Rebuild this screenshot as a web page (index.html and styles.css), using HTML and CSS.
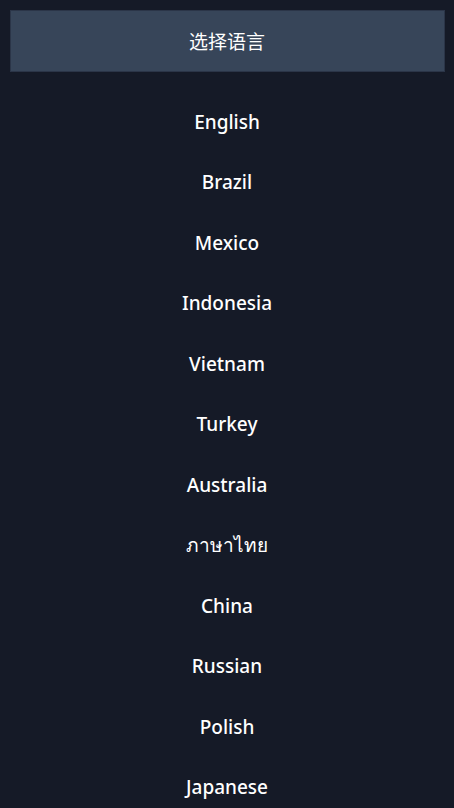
FILE: index.html
```html
<!DOCTYPE html>
<html lang="zh">
<head>
<meta charset="utf-8">
<link rel="stylesheet" href="styles.css">
</head>
<body>
<div class="page">
  <div class="header">选择语言</div>
  <ul class="lang-list">
    <li class="lang">English</li>
    <li class="lang">Brazil</li>
    <li class="lang">Mexico</li>
    <li class="lang">Indonesia</li>
    <li class="lang">Vietnam</li>
    <li class="lang">Turkey</li>
    <li class="lang">Australia</li>
    <li class="lang">ภาษาไทย</li>
    <li class="lang">China</li>
    <li class="lang">Russian</li>
    <li class="lang">Polish</li>
    <li class="lang">Japanese</li>
  </ul>
</div>
</body>
</html>
```
FILE: styles.css
```css
html, body {
  margin: 0;
  padding: 0;
  background: #151a27;
  height: 100%;
  overflow: hidden;
}
.page {
  padding: 9.5px 9.5px 0;
  font-family: "Noto Sans", "Noto Sans CJK SC", sans-serif;
  color: #ffffff;
}
.header {
  height: 60px;
  background: #374559;
  border: 1px solid #2b3548;
  display: flex;
  align-items: center;
  justify-content: center;
  font-size: 19px;
  font-family: "Noto Sans CJK SC", sans-serif;
}
.lang-list {
  list-style: none;
  margin: 20px 0 0;
  padding: 0;
}
.lang {
  height: 60.5px;
  display: flex;
  align-items: center;
  justify-content: center;
  font-size: 19px;
  font-weight: 500;
}
```
